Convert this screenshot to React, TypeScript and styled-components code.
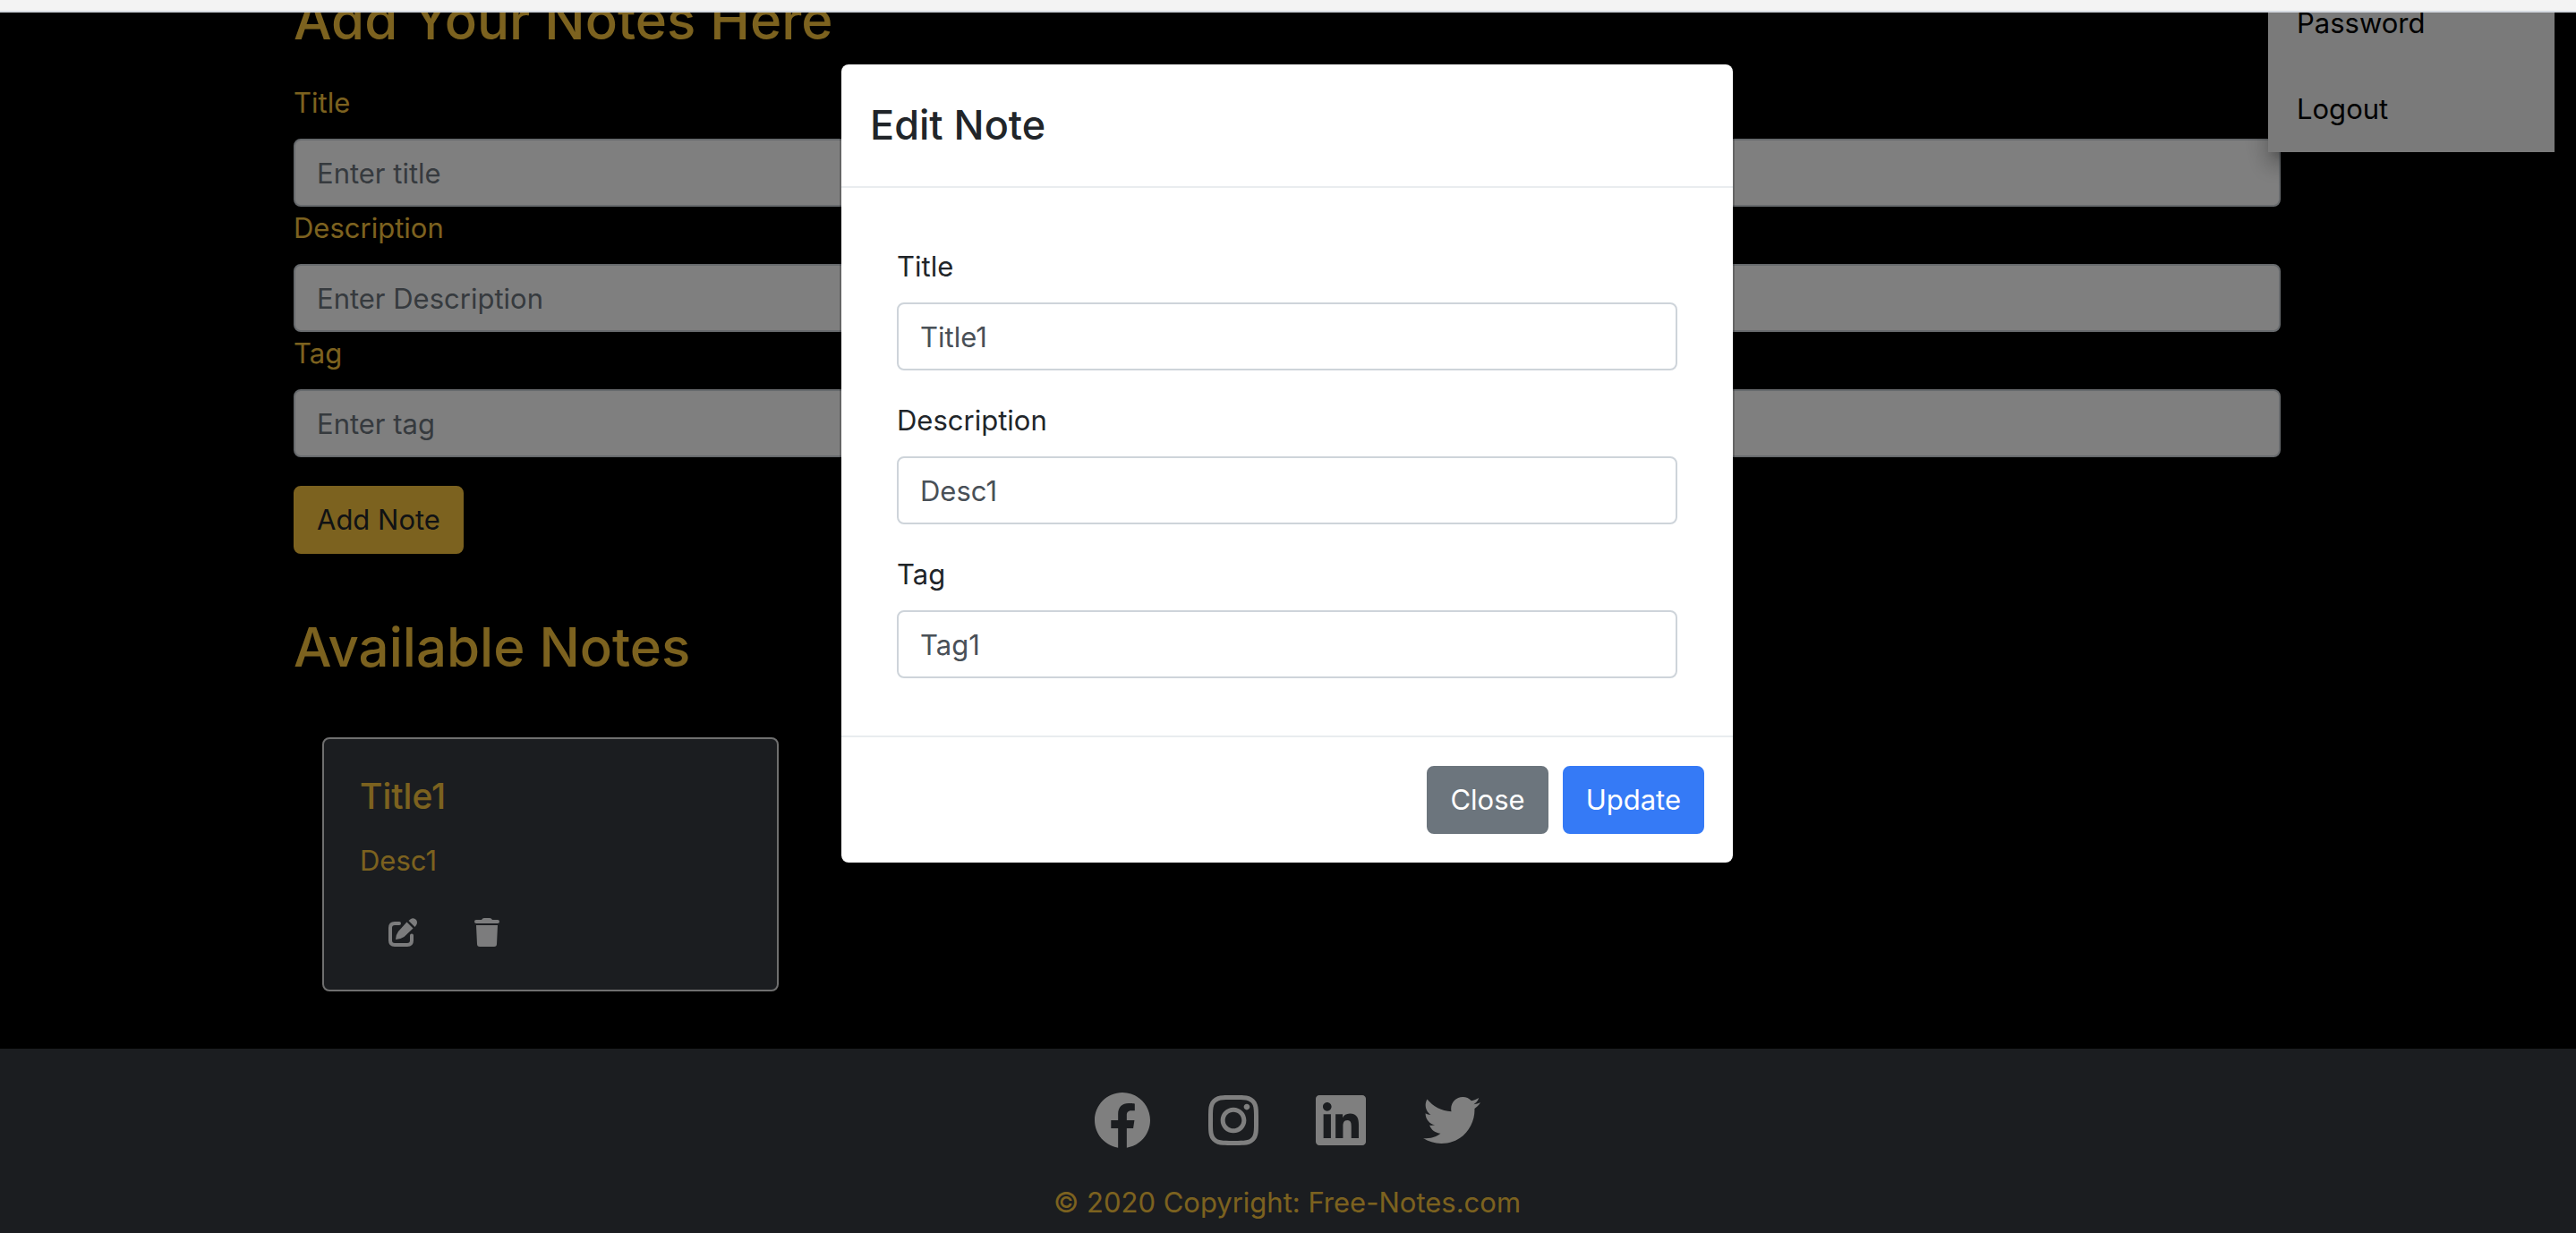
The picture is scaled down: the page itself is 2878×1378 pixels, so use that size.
import React from "react";
import styled, { createGlobalStyle } from "styled-components";
import { FaFacebook, FaInstagram, FaLinkedin, FaTwitter } from "react-icons/fa";

const Global = createGlobalStyle`
  *, *::before, *::after { box-sizing: border-box; }
  body { margin: 0; background: #000; color: #212529; font-family: Inter, Roboto, "Liberation Sans", sans-serif; font-size: 31px; line-height: 48px; }
  h2, h3, h5, p { margin: 0; font-weight: 500; }
  button, input { font: inherit; }
`;

const gold = "#f8c43e";

const Shell = styled.div`
  display: flex;
  flex-direction: column;
  height: 100vh;
  overflow: hidden;
`;
const Chrome = styled.div`
  flex: none;
  height: 14px;
  background: #f3f3f3;
  border-bottom: 2px solid #d5d9e0;
`;
const Viewport = styled.div`
  position: relative;
  flex: 1;
  min-height: 0;
  overflow: hidden;
`;
const Page = styled.div`
  display: flex;
  flex-direction: column;
  height: 100%;
  padding-right: 2px;
`;
const Main = styled.main`
  width: 100%;
  max-width: 2220px;
  margin: -30px auto 0;
  flex: none;
`;
const Heading = styled.h2`
  color: ${gold};
  font-size: 60px;
  line-height: 77px;
`;
const NoteForm = styled.form`
  display: flex;
  flex-direction: column;
  align-items: flex-start;
  padding: 30px 0 66px;
`;
const Label = styled.label<{ $light?: boolean }>`
  display: block;
  margin-bottom: 16px;
  color: ${(p) => (p.$light ? gold : "#212529")};
`;
const Input = styled.input`
  display: block;
  width: 100%;
  height: 76px;
  padding: 12px 24px;
  border: 2px solid #ced4da;
  border-radius: 8px;
  background: #fff;
  color: #495057;
  outline: none;
  &::placeholder { color: #6c757d; opacity: 1; }
`;
const Button = styled.button<{ $bg: string; $fg: string }>`
  height: 76px;
  padding: 12px 24px;
  border: 2px solid ${(p) => p.$bg};
  border-radius: 8px;
  background: ${(p) => p.$bg};
  color: ${(p) => p.$fg};
`;
const AddButton = styled(Button)`
  margin-top: 32px;
`;
const Card = styled.article`
  width: 510px;
  margin: 62px 32px 64px;
  padding: 40px;
  border: 2px solid #dedede;
  border-radius: 8px;
  background: #363b40;
  color: ${gold};
`;
const CardTitle = styled.h5`
  font-size: 39px;
  line-height: 48px;
  margin-bottom: 24px;
`;
const CardText = styled.p`
  font-weight: 400;
`;
const CardActions = styled.div`
  display: flex;
  gap: 64px;
  padding: 40px 32px 8px;
`;
const IconButton = styled.button`
  display: flex;
  padding: 0;
  border: 0;
  background: none;
  color: #f8f9fa;
`;
const Footer = styled.footer`
  flex: 1 0 auto;
  display: flex;
  flex-direction: column;
  align-items: center;
  margin-right: -2px;
  padding: 48px 2px 0 0;
  background: #363b40;
  color: ${gold};
`;
const Socials = styled.nav`
  display: flex;
  gap: 64px;
  margin-bottom: 36px;
`;
const SocialLink = styled.a<{ $width: number }>`
  display: flex;
  color: #fff;
  svg { width: ${(p) => p.$width}px; height: 64px; }
`;
const Dropdown = styled.div`
  position: absolute;
  top: -36px;
  right: 24px;
  width: 320px;
  display: flex;
  flex-direction: column;
  background: #f4f4f4;
  box-shadow: 0 10px 10px -6px rgba(0,0,0,.2), 0 16px 20px 2px rgba(0,0,0,.14), 0 6px 28px 4px rgba(0,0,0,.12);
`;
const DropdownItem = styled.a`
  padding: 24px 32px;
  color: #000;
  text-decoration: none;
`;
const Backdrop = styled.div`
  position: absolute;
  inset: 0;
  display: flex;
  justify-content: center;
  align-items: flex-start;
  padding: 56px 2px 0 0;
  background: rgba(0,0,0,.5);
`;
const Modal = styled.section`
  width: 1000px;
  border: 2px solid rgba(0,0,0,.2);
  border-radius: 10px;
  background: #fff;
  background-clip: padding-box;
`;
const ModalHeader = styled.header`
  padding: 32px;
  border-bottom: 2px solid #e9ecef;
`;
const ModalTitle = styled.h3`
  font-size: 45px;
  line-height: 72px;
`;
const ModalBody = styled.form`
  display: flex;
  flex-direction: column;
  gap: 32px;
  padding: 64px 62px;
`;
const ModalFooter = styled.footer`
  display: flex;
  justify-content: flex-end;
  gap: 16px;
  padding: 32px;
  border-top: 2px solid #e9ecef;
`;

const noteFields = [
  { id: "title", label: "Title", placeholder: "Enter title", value: "Title1" },
  { id: "description", label: "Description", placeholder: "Enter Description", value: "Desc1" },
  { id: "tag", label: "Tag", placeholder: "Enter tag", value: "Tag1" },
];

const socials = [
  { name: "Facebook", Icon: FaFacebook, width: 64 },
  { name: "Instagram", Icon: FaInstagram, width: 56 },
  { name: "LinkedIn", Icon: FaLinkedin, width: 56 },
  { name: "Twitter", Icon: FaTwitter, width: 64 },
];

const EditIcon = () => (
  <svg width="32" height="32" viewBox="0 0 32 32" fill="none" aria-hidden="true">
    <path d="M12 6H7Q2 6 2 11V25Q2 30 7 30H21Q26 30 26 25V19.500" stroke="currentColor" strokeWidth="4" strokeLinecap="round" />
    <path d="M20.500 4.500L27.500 11.500L17.500 21Q13 24 8 24Q8 19 11 15Z" fill="currentColor" />
    <path d="M22.500 3L25 1Q28 -1 31 2Q33 5 31 8L29.500 10Z" fill="currentColor" />
  </svg>
);
const TrashIcon = () => (
  <svg width="28" height="32" viewBox="0 0 28 32" fill="currentColor" aria-hidden="true">
    <path d="M2 2H8Q9 0 11 0H17Q19 0 20 2H26Q28 2 28 4T26 6H2Q0 6 0 4T2 2ZM2 8H26L25 29Q25 32 22 32H6Q3 32 3 29Z" />
  </svg>
);

export default function App() {
  return (
    <Shell>
      <Global />
      <Chrome />
      <Viewport>
        <Page>
          <Main>
            <Heading>Add Your Notes Here</Heading>
            <NoteForm>
              {noteFields.map((f) => (
                <React.Fragment key={f.id}>
                  <Label $light htmlFor={f.id}>{f.label}</Label>
                  <Input id={f.id} placeholder={f.placeholder} />
                </React.Fragment>
              ))}
              <AddButton type="button" $bg={gold} $fg="#212529">Add Note</AddButton>
            </NoteForm>
            <Heading>Available Notes</Heading>
            <Card>
              <CardTitle>Title1</CardTitle>
              <CardText>Desc1</CardText>
              <CardActions>
                <IconButton aria-label="Edit note"><EditIcon /></IconButton>
                <IconButton aria-label="Delete note"><TrashIcon /></IconButton>
              </CardActions>
            </Card>
          </Main>
          <Footer>
            <Socials>
              {socials.map(({ name, Icon, width }) => (
                <SocialLink key={name} href="#" aria-label={name} $width={width}><Icon /></SocialLink>
              ))}
            </Socials>
            <div>© 2020 Copyright: Free-Notes.com</div>
          </Footer>
        </Page>
        <Dropdown>
          <DropdownItem href="#">Password</DropdownItem>
          <DropdownItem href="#">Logout</DropdownItem>
        </Dropdown>
        <Backdrop>
          <Modal role="dialog" aria-labelledby="edit-heading">
            <ModalHeader><ModalTitle id="edit-heading">Edit Note</ModalTitle></ModalHeader>
            <ModalBody>
              {noteFields.map((f) => (
                <div key={f.id}>
                  <Label htmlFor={`edit-${f.id}`}>{f.label}</Label>
                  <Input id={`edit-${f.id}`} defaultValue={f.value} />
                </div>
              ))}
            </ModalBody>
            <ModalFooter>
              <Button type="button" $bg="#6c757d" $fg="#fff">Close</Button>
              <Button type="button" $bg="#357af6" $fg="#fff">Update</Button>
            </ModalFooter>
          </Modal>
        </Backdrop>
      </Viewport>
    </Shell>
  );
}
